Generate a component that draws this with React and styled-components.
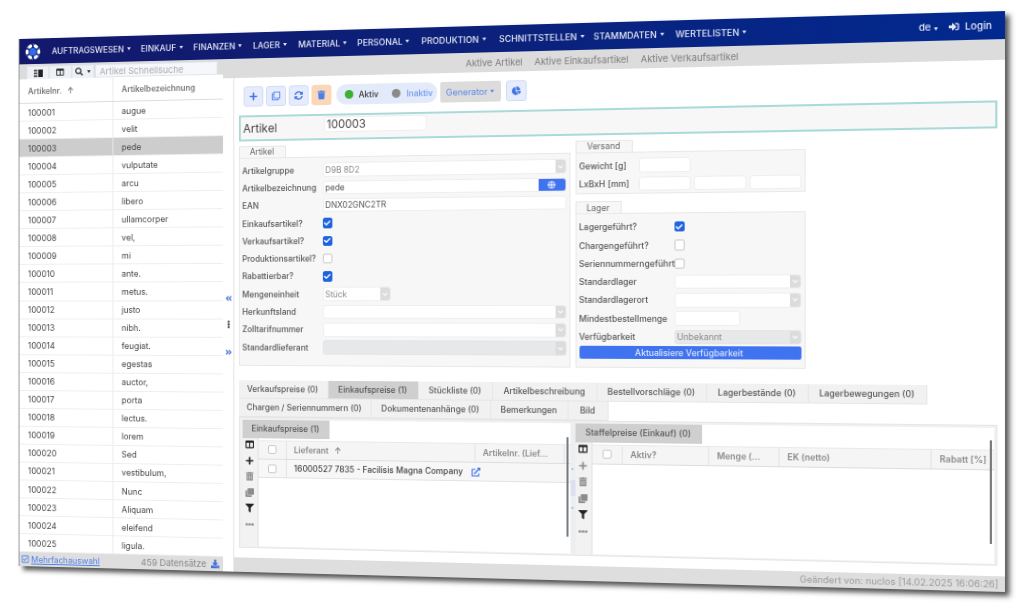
import React from "react";
import styled, { createGlobalStyle } from "styled-components";
import {
  FaPlus, FaRegClone, FaSyncAlt, FaTrash, FaTrashAlt, FaChartPie, FaColumns, FaSearch, FaGlobe, FaFilter,
  FaEllipsisH, FaEllipsisV, FaExternalLinkAlt, FaSignInAlt, FaAngleDoubleLeft, FaAngleDoubleRight,
  FaCheck, FaChevronDown, FaDownload, FaRegCheckSquare, FaClone,
} from "react-icons/fa";

const W = 1000;
const H = 560;

function quadMatrix([x0, y0], [x1, y1], [x2, y2], [x3, y3]) {
  const dx1 = x1 - x2, dx2 = x3 - x2, dx3 = x0 - x1 + x2 - x3;
  const dy1 = y1 - y2, dy2 = y3 - y2, dy3 = y0 - y1 + y2 - y3;
  const den = dx1 * dy2 - dx2 * dy1;
  const g = (dx3 * dy2 - dx2 * dy3) / den;
  const h = (dx1 * dy3 - dx3 * dy1) / den;
  const a = x1 - x0 + g * x1, b = x3 - x0 + h * x3;
  const d = y1 - y0 + g * y1, e = y3 - y0 + h * y3;
  return `matrix3d(${a / W},${d / W},0,${g / W},${b / H},${e / H},0,${h / H},0,0,1,0,${x0},${y0},0,1)`;
}
const TILT = quadMatrix([19.5, 39], [1005, 11], [1005, 592], [19.5, 566]);

const Global = createGlobalStyle`
  html, body { margin: 0; padding: 0; background: #fff; width: 1024px; height: 606px; overflow: hidden; }
  body { font-family: Inter, "Noto Sans", "Liberation Sans", sans-serif; }
  * { box-sizing: border-box; }
`;

const Window = styled.div`
  width: ${W}px; height: ${H}px;
  transform-origin: 0 0;
  transform: ${TILT};
  display: flex; flex-direction: column;
  background: #fff;
  box-shadow: -1px 0 0 #8a8f96, 4px 4px 5px rgba(40,40,40,.8);
  filter: blur(.45px);
  color: #444;
  font-size: 9px;
`;

/* Top navigation */
const Nav = styled.div`
  height: 27px; flex: none;
  display: flex; align-items: center;
  background: linear-gradient(90deg, #13186a 0%, #0c2079 45%, #02298f 100%);
  color: #e6e9f5;
  font-size: 8.8px; font-weight: 500;
  padding-left: 6px;
`;
const Logo = styled.svg` width: 18px; height: 18px; flex: none; margin-right: 12px; `;
const NavItem = styled.div`
  width: ${p => p.$w}px; flex: none; white-space: nowrap;
  display: flex; align-items: center; letter-spacing: .05px;
`;
const Caret = styled.span`
  display: inline-block; margin-left: 3px;
  border-left: 2.5px solid transparent; border-right: 2.5px solid transparent;
  border-top: 3px solid ${p => p.$c || "currentColor"};
`;
const NavRight = styled.div`
  margin-left: auto; margin-right: 12px; display: flex; align-items: center; gap: 10px; font-size: 9.5px;
  svg { font-size: 9.5px; margin-right: 5px; vertical-align: -1px; }
`;

const BodyRow = styled.div` flex: 1; display: flex; min-height: 0; `;

/* Left list */
const Sidebar = styled.div` width: 223px; flex: none; display: flex; flex-direction: column; `;
const SideBar = styled.div`
  height: 16px; flex: none; background: #dcdcdc; display: flex; padding: 2px 6px 0 8px; gap: 0;
`;
const SideBtn = styled.div`
  width: ${p => p.$w || 25}px; background: #eef1f6; border: 1px solid #e2e5ea; border-bottom: 0;
  display: flex; align-items: center; justify-content: center; color: #333; font-size: 8.5px; gap: 1px;
`;
const SideSearch = styled.div`
  flex: 1; background: #f5f7fa; border: 1px solid #e2e5ea; color: #a8adb3; font-size: 9.5px;
  display: flex; align-items: center; padding-left: 4px; margin-left: 1px;
`;
const PanelGlyph = styled.svg` width: 10px; height: 8px; `;
const ListHead = styled.div`
  height: 26px; flex: none; display: flex; align-items: center; font-weight: 600; color: #777;
  border-bottom: 1px solid #dcdcdc; font-size: 8.5px;
`;
const ListRow = styled.div`
  height: 19.05px; flex: none; display: flex; align-items: center; border-bottom: 1px solid #eee;
  background: ${p => (p.$sel ? "#cdcdcd" : "#fff")}; color: #444; font-size: 9px;
`;
const ColA = styled.div`
  width: 104px; flex: none; height: 100%; padding-left: 9.5px; display: flex; align-items: center;
  gap: 6px; border-right: 1px solid #eaeaea;
  svg { font-size: 5px; color: #999; }
`;
const ColB = styled.div` flex: 1; padding-left: 9px; `;
const SideFoot = styled.div`
  flex: 1; background: #dedede; display: flex; align-items: center; font-size: 9px; color: #888; padding: 0 4px 0 2px;
`;
const MultiLink = styled.span`
  color: #4f7fe8; text-decoration: underline; display: flex; align-items: center; gap: 2px;
  svg { font-size: 9px; }
`;
const Count = styled.span`
  margin-left: auto; display: flex; align-items: center; gap: 5px; font-size: 9.5px;
  svg { color: #3f6fd8; font-size: 9px; }
`;

/* Right side */
const RightCol = styled.div` flex: 1; display: flex; flex-direction: column; min-width: 0; `;
const SubBar = styled.div`
  height: 20px; flex: none; background: #dcdcdc; color: #7d7d7d; font-size: 9.3px;
  display: flex; align-items: center; padding-left: 254px; gap: 12px;
`;
const SubLink = styled.span` white-space: nowrap; `;
const Work = styled.div` flex: 1; display: flex; min-height: 0; `;
const Splitter = styled.div`
  width: 12px; flex: none; border-right: 1px solid #e2e2e2; display: flex; flex-direction: column;
  align-items: center; padding-top: 225px; gap: 19px; color: #3f6fd8; font-size: 8px;
`;
const SplitDots = styled.span` color: #333; `;
const Main = styled.div` flex: 1; display: flex; flex-direction: column; min-width: 0; `;
const Content = styled.div` flex: 1; padding: 9px 7px 0 4.5px; display: flex; flex-direction: column; `;
const Toolbar = styled.div` height: 21px; flex: none; display: flex; padding-left: 5px; `;
const ToolBtn = styled.div`
  width: ${p => p.$w || 21}px; margin-right: ${p => p.$gap ?? 3}px;
  display: flex; align-items: center; justify-content: center; border-radius: 3px; font-size: 9px;
  background: ${p => (p.$danger ? "#fbd7b9" : "#e6ecfb")};
  color: ${p => (p.$danger ? "#4a7fe6" : "#3f73e6")};
  border: 1px solid ${p => (p.$danger ? "#fbd7b9" : "#cfdcf8")};
`;
const Pill = styled.div`
  width: 105px; margin-right: 3px; border-radius: 11px; background: #e3ebfb;
  display: flex; align-items: center; padding-left: 9px; font-size: 8.5px; font-weight: 500;
`;
const Dot = styled.span`
  width: 9px; height: 9px; border-radius: 50%; background: ${p => p.$c}; margin-right: 6px; flex: none;
`;
const PillText = styled.span` color: ${p => p.$c}; margin-right: ${p => p.$m || 0}px; `;
const GenBtn = styled.div`
  width: 62px; margin-right: 5px; background: #dcdcdc; color: #5c86e8; border-radius: 2px;
  display: flex; align-items: center; justify-content: center; font-size: 9px;
`;
const Title = styled.div`
  height: 27.5px; flex: none; margin-top: 8.5px; border: 2px solid #a9dad9; background: #f7f7f7;
  display: flex; align-items: center; font-size: 12px; color: #444;
`;
const TitleLabel = styled.span` width: 88.5px; padding-left: 3px; flex: none; `;
const TitleInput = styled.div`
  width: 107px; height: 16.5px; background: #fff; border: 1px solid #eee; border-radius: 3px;
  font-size: 11.5px; padding-left: 2px; display: flex; align-items: center; margin-top: -5px;
`;
const Forms = styled.div` flex: none; display: flex; gap: 5px; margin-top: 4.5px; height: 228px; `;
const FormCol = styled.div` display: flex; flex-direction: column; width: ${p => p.$w}px; flex: none; `;
const GroupTab = styled.div`
  width: ${p => p.$w}px; height: 12px; background: #f7f7f7; border: 1px solid #e6e6e6; border-bottom: 0;
  color: #666; font-size: 8.5px; display: flex; align-items: center; justify-content: center;
  flex: none; margin-top: ${p => p.$mt || 0}px;
`;
const Group = styled.div`
  flex: ${p => (p.$grow ? 1 : "none")}; background: #f7f7f7; border: 1px solid #e8e8e8;
  padding: 4px 3px 0 3px; display: flex; flex-direction: column;
`;
const Row = styled.div` height: 18.3px; flex: none; display: flex; align-items: center; `;
const Label = styled.div`
  width: ${p => p.$w}px; flex: none; white-space: nowrap; color: #555; font-size: 8.5px; font-weight: 500;
`;
const Field = styled.div`
  position: relative;
  flex: ${p => (p.$w ? "none" : 1)}; width: ${p => (p.$w ? `${p.$w}px` : "auto")}; height: 14.5px;
  margin-right: ${p => p.$mr || 0}px;
  background: ${p => (p.$off ? "#e7e8ea" : "#fff")};
  border: 1px solid ${p => (p.$off ? "#e3e4e6" : "#eeeeee")}; border-radius: 3px;
  color: ${p => (p.$muted ? "#8a8a8a" : "#555")}; font-size: 8.5px;
  display: flex; align-items: center; padding-left: 2px; overflow: hidden;
`;
const SelBox = styled.span`
  position: absolute; right: 0; top: 0; bottom: 0; width: 10px; background: #dcdcdc; color: #fff;
  display: flex; align-items: center; justify-content: center; font-size: 6px;
`;
const GlobeBtn = styled.span`
  position: absolute; right: 0; top: -1px; bottom: -1px; width: 27px; background: #3f73f0; color: #dfe8fb;
  display: flex; align-items: center; justify-content: center; font-size: 8px; border-radius: 0 3px 3px 0;
`;
const Box = styled.span`
  width: ${p => p.$s || 10.5}px; height: ${p => p.$s || 10.5}px; flex: none; border-radius: 2px;
  background: ${p => (p.$on ? "#1e63e0" : "#fff")};
  border: 1px solid ${p => (p.$on ? "#1e63e0" : "#c9c9c9")};
  color: #fff; display: flex; align-items: center; justify-content: center; font-size: 7px;
`;
const WideBtn = styled.div`
  height: 13px; margin-top: 0; background: #3f73f0; color: #dbe5fb; border-radius: 2px; font-size: 8.5px;
  font-weight: 500; display: flex; align-items: center; justify-content: center;
`;
const TabRow = styled.div` display: flex; height: 19px; flex: none; margin-top: ${p => p.$mt || 0}px; `;
const Tab = styled.div`
  width: ${p => p.$w}px; flex: none; display: flex; align-items: center; justify-content: center;
  background: ${p => (p.$on ? "#cfcfcf" : "#f1f1f1")}; border: 1px solid #e6e6e6; border-width: 0 1px 1px 0;
  font-size: 8.5px; font-weight: 500; color: #555; white-space: nowrap;
`;
const Lower = styled.div`
  height: 136px; flex: none; margin-top: 0; background: #f0f0f0; border: 1px solid #e6e6e6;
  padding: 2px 2px 1px 3px; display: flex;
`;
const Pane = styled.div`
  width: ${p => p.$w}px; flex: none; display: flex; flex-direction: column; background: #fff; position: relative;
`;
const PaneTab = styled.div`
  width: ${p => p.$w}px; height: 19px; flex: none; background: #cfcfcf; color: #555; font-size: 8.5px; font-weight: 500;
  display: flex; align-items: center; justify-content: center;
`;
const GridBody = styled.div` flex: 1; display: flex; min-height: 0; `;
const Tools = styled.div`
  width: 17px; flex: none; background: #f2f2f2; border-right: 1px solid #e2e2e2; display: flex; flex-direction: column;
  align-items: center; padding-top: 3px; gap: 8.6px; font-size: 9px; color: #333;
`;
const ToolIcon = styled.span` display: flex; color: ${p => (p.$dim ? "#8c8c8c" : "#222")}; height: 8px; align-items: center; `;
const Table = styled.div` flex: 1; min-width: 0; display: flex; flex-direction: column; padding-top: 2px; `;
const THead = styled.div`
  height: 20.5px; flex: none; display: flex; background: #f5f5f5; border-bottom: 1px solid #ddd; border-top: 1px solid #e9e9e9;
  font-weight: 600; font-size: 8.5px; color: #8a8a8a;
`;
const TRow = styled.div`
  height: 19px; flex: none; display: flex; background: #f7f7f7; border-bottom: 1px solid #e2e2e2;
  font-size: 8.5px; font-weight: 500; color: #444;
`;
const Cell = styled.div`
  width: ${p => p.$w}px; flex: none; display: flex; align-items: center; gap: ${p => p.$gap || 0}px;
  padding-left: ${p => p.$pl ?? 8}px; white-space: nowrap; overflow: hidden;
  justify-content: ${p => (p.$center ? "center" : "flex-start")};
  box-shadow: inset -1px 0 0 ${p => (p.$noline ? "transparent" : "#e4e4e4")};
  svg { font-size: 6px; color: #999; }
`;
const LinkIcon = styled.span`
  display: flex; margin-left: 9px; svg { font-size: 9px; color: #3f73f0; }
`;
const ScrollLine = styled.span`
  position: absolute; right: ${p => p.$r}px; top: ${p => p.$t}px; height: ${p => p.$h}px; width: 1.5px; background: #77797c;
`;
const PaneSplit = styled.div`
  width: 5px; flex: none; display: flex; flex-direction: column; align-items: center; justify-content: center;
  gap: 0; color: #4f7fe8; font-size: 4px; background: #eceef0;
`;
const Thumb = styled.span` width: 5px; height: 16px; background: #dde1ee; margin: 9px 0; `;
const StatusBar = styled.div`
  height: 15px; flex: none; background: #dedede; color: #9a9a9a; font-size: 9px;
  display: flex; align-items: center; justify-content: flex-end; padding-right: 6px;
`;

const ITEMS = [
  ["100001", "augue"], ["100002", "velit"], ["100003", "pede"], ["100004", "vulputate"], ["100005", "arcu"],
  ["100006", "libero"], ["100007", "ullamcorper"], ["100008", "vel,"], ["100009", "mi"], ["100010", "ante."],
  ["100011", "metus."], ["100012", "justo"], ["100013", "nibh."], ["100014", "feugiat."], ["100015", "egestas"],
  ["100016", "auctor,"], ["100017", "porta"], ["100018", "lectus."], ["100019", "lorem"], ["100020", "Sed"],
  ["100021", "vestibulum,"], ["100022", "Nunc"], ["100023", "Aliquam"], ["100024", "eleifend"], ["100025", "ligula."],
];
const NAV = [
  ["AUFTRAGSWESEN", 98], ["EINKAUF", 57], ["FINANZEN", 64], ["LAGER", 48], ["MATERIAL", 62], ["PERSONAL", 66.5],
  ["PRODUKTION", 79.5], ["SCHNITTSTELLEN", 95], ["STAMMDATEN", 81], ["WERTELISTEN", 70],
];

function LogoMark() {
  const spokes = [0, 60, 120, 180, 240, 300];
  return (
    <Logo viewBox="0 0 32 32">
      <circle cx="16" cy="16" r="7" fill="#2f6df0" />
      {spokes.map(a => (
        <g key={a} transform={`rotate(${a + 30} 16 16)`}>
          <rect x="11.5" y="1.5" width="9" height="6" rx="2.5" fill="#fff" />
          <circle cx="24" cy="4.5" r="1.7" fill="#2f6df0" />
        </g>
      ))}
    </Logo>
  );
}

function Select({ value, w, off, muted }) {
  return (
    <Field $w={w} $off={off} $muted={muted}>
      {value}
      <SelBox><FaChevronDown /></SelBox>
    </Field>
  );
}

function GridTools({ dimAdd }) {
  return (
    <Tools>
      <ToolIcon><FaColumns /></ToolIcon>
      <ToolIcon $dim={dimAdd}><FaPlus /></ToolIcon>
      <ToolIcon $dim><FaTrashAlt /></ToolIcon>
      <ToolIcon $dim><FaClone /></ToolIcon>
      <ToolIcon><FaFilter /></ToolIcon>
      <ToolIcon $dim><FaEllipsisH /></ToolIcon>
    </Tools>
  );
}

export default function App() {
  return (
    <>
      <Global />
      <Window>
        <Nav>
          <LogoMark />
          {NAV.map(([t, w]) => (
            <NavItem key={t} $w={w}>{t}<Caret /></NavItem>
          ))}
          <NavRight>
            <span>de<Caret /></span>
            <span><FaSignInAlt />Login</span>
          </NavRight>
        </Nav>
        <BodyRow>
          <Sidebar>
            <SideBar>
              <SideBtn>
                <PanelGlyph viewBox="0 0 10 8">
                  <rect x="0" y="0" width="4" height="2" fill="#555" />
                  <rect x="0" y="3" width="4" height="2" fill="#555" />
                  <rect x="0" y="6" width="4" height="2" fill="#555" />
                  <rect x="5" y="0" width="5" height="8" fill="#222" />
                </PanelGlyph>
              </SideBtn>
              <SideBtn><FaColumns /></SideBtn>
              <SideBtn><FaSearch /><Caret /></SideBtn>
              <SideSearch>Artikel Schnellsuche</SideSearch>
            </SideBar>
            <ListHead>
              <ColA>Artikelnr. <span>↑</span></ColA>
              <ColB>Artikelbezeichnung</ColB>
            </ListHead>
            {ITEMS.map(([n, t]) => (
              <ListRow key={n} $sel={n === "100003"}>
                <ColA>{n}</ColA>
                <ColB>{t}</ColB>
              </ListRow>
            ))}
            <SideFoot>
              <MultiLink><FaRegCheckSquare />Mehrfachauswahl</MultiLink>
              <Count>459 Datensätze <FaDownload /></Count>
            </SideFoot>
          </Sidebar>
          <RightCol>
            <SubBar>
              <SubLink>Aktive Artikel</SubLink>
              <SubLink>Aktive Einkaufsartikel</SubLink>
              <SubLink>Aktive Verkaufsartikel</SubLink>
            </SubBar>
            <Work>
              <Splitter>
                <FaAngleDoubleLeft />
                <SplitDots><FaEllipsisV /></SplitDots>
                <FaAngleDoubleRight />
              </Splitter>
              <Main>
                <Content>
                  <Toolbar>
                    <ToolBtn><FaPlus /></ToolBtn>
                    <ToolBtn><FaRegClone /></ToolBtn>
                    <ToolBtn><FaSyncAlt /></ToolBtn>
                    <ToolBtn $danger $gap={5}><FaTrash /></ToolBtn>
                    <Pill>
                      <Dot $c="#3cb034" />
                      <PillText $c="#333" $m={14}>Aktiv</PillText>
                      <Dot $c="#8a8a8a" />
                      <PillText $c="#6f95ee">Inaktiv</PillText>
                    </Pill>
                    <GenBtn>Generator<Caret /></GenBtn>
                    <ToolBtn><FaChartPie /></ToolBtn>
                  </Toolbar>
                  <Title>
                    <TitleLabel>Artikel</TitleLabel>
                    <TitleInput>100003</TitleInput>
                  </Title>
                  <Forms>
                    <FormCol $w={343}>
                      <GroupTab $w={50}>Artikel</GroupTab>
                      <Group $grow>
                        <Row><Label $w={85}>Artikelgruppe</Label><Select value="D9B 8D2" muted /></Row>
                        <Row>
                          <Label $w={85}>Artikelbezeichnung</Label>
                          <Field>pede<GlobeBtn><FaGlobe /></GlobeBtn></Field>
                        </Row>
                        <Row><Label $w={85}>EAN</Label><Field>DNX02GNC2TR</Field></Row>
                        <Row><Label $w={85}>Einkaufsartikel?</Label><Box $on><FaCheck /></Box></Row>
                        <Row><Label $w={85}>Verkaufsartikel?</Label><Box $on><FaCheck /></Box></Row>
                        <Row><Label $w={85}>Produktionsartikel?</Label><Box /></Row>
                        <Row><Label $w={85}>Rabattierbar?</Label><Box $on><FaCheck /></Box></Row>
                        <Row><Label $w={85}>Mengeneinheit</Label><Select value="Stück" w={71} muted /></Row>
                        <Row><Label $w={85}>Herkunftsland</Label><Select /></Row>
                        <Row><Label $w={85}>Zolltarifnummer</Label><Select /></Row>
                        <Row><Label $w={85}>Standardlieferant</Label><Select off /></Row>
                      </Group>
                    </FormCol>
                    <FormCol $w={225}>
                      <GroupTab $w={57}>Versand</GroupTab>
                      <Group>
                        <Row><Label $w={59}>Gewicht [g]</Label><Field $w={51} /></Row>
                        <Row>
                          <Label $w={59}>LxBxH [mm]</Label>
                          <Field $w={51} $mr={3} />
                          <Field $w={51} $mr={3} />
                          <Field $w={50} />
                        </Row>
                      </Group>
                      <GroupTab $w={46} $mt={7}>Lager</GroupTab>
                      <Group $grow>
                        <Row><Label $w={94}>Lagergeführt?</Label><Box $on><FaCheck /></Box></Row>
                        <Row><Label $w={94}>Chargengeführt?</Label><Box /></Row>
                        <Row><Label $w={94}>Seriennummerngeführt</Label><Box /></Row>
                        <Row><Label $w={94}>Standardlager</Label><Select /></Row>
                        <Row><Label $w={94}>Standardlagerort</Label><Select /></Row>
                        <Row><Label $w={94}>Mindestbestellmenge</Label><Field $w={64} /></Row>
                        <Row><Label $w={94}>Verfügbarkeit</Label><Select value="Unbekannt" off muted /></Row>
                        <WideBtn>Aktualisiere Verfügbarkeit</WideBtn>
                      </Group>
                    </FormCol>
                  </Forms>
                  <TabRow $mt={15}>
                    <Tab $w={95}>Verkaufspreise (0)</Tab>
                    <Tab $w={94} $on>Einkaufspreise (1)</Tab>
                    <Tab $w={76}>Stückliste (0)</Tab>
                    <Tab $w={105}>Artikelbeschreibung</Tab>
                    <Tab $w={108}>Bestellvorschläge (0)</Tab>
                    <Tab $w={98}>Lagerbestände (0)</Tab>
                    <Tab $w={112}>Lagerbewegungen (0)</Tab>
                  </TabRow>
                  <TabRow>
                    <Tab $w={140}>Chargen / Seriennummern (0)</Tab>
                    <Tab $w={123}>Dokumentenanhänge (0)</Tab>
                    <Tab $w={78}>Bemerkungen</Tab>
                    <Tab $w={40}>Bild</Tab>
                  </TabRow>
                  <Lower>
                    <Pane $w={339}>
                      <PaneTab $w={92}>Einkaufspreise (1)</PaneTab>
                      <GridBody>
                        <GridTools />
                        <Table>
                          <THead>
                            <Cell $w={30} $pl={0} $center><Box $s={9} /></Cell>
                            <Cell $w={196} $gap={6}>Lieferant <span>↑</span></Cell>
                            <Cell $w={90}>Artikelnr. (Lief...</Cell>
                          </THead>
                          <TRow>
                            <Cell $w={30} $pl={0} $center><Box $s={9} /></Cell>
                            <Cell $w={260} $noline>
                              16000527 7835 - Facilisis Magna Company
                              <LinkIcon><FaExternalLinkAlt /></LinkIcon>
                            </Cell>
                          </TRow>
                        </Table>
                      </GridBody>
                      <ScrollLine $r={2} $t={14} $h={100} />
                    </Pane>
                    <PaneSplit>
                      «<Thumb />»
                    </PaneSplit>
                    <Pane $w={402}>
                      <PaneTab $w={125}>Staffelpreise (Einkauf) (0)</PaneTab>
                      <GridBody>
                        <GridTools dimAdd />
                        <Table>
                          <THead>
                            <Cell $w={30} $pl={0} $center><Box $s={9} /></Cell>
                            <Cell $w={85}>Aktiv?</Cell>
                            <Cell $w={68}>Menge (...</Cell>
                            <Cell $w={144}>EK (netto)</Cell>
                            <Cell $w={58} $noline>Rabatt [%]</Cell>
                          </THead>
                        </Table>
                      </GridBody>
                      <ScrollLine $r={2} $t={12} $h={100} />
                    </Pane>
                  </Lower>
                </Content>
                <StatusBar>Geändert von: nuclos [14.02.2025 16:06:26]</StatusBar>
              </Main>
            </Work>
          </RightCol>
        </BodyRow>
      </Window>
    </>
  );
}
